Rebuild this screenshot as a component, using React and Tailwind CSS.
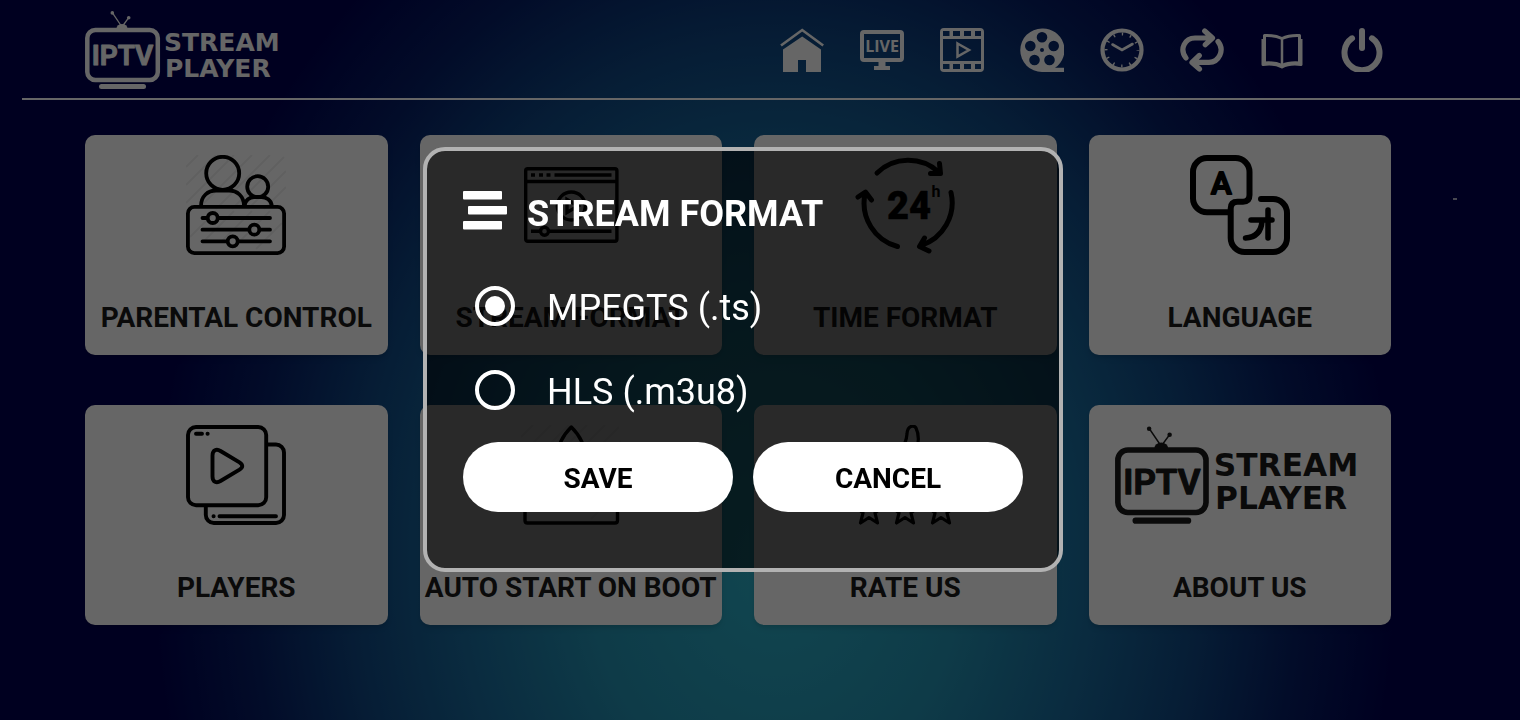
import { useState } from "react";

// LOGO
function Logo({ className }) {
  return (
    <svg viewBox="0 0 200 80" className={className} fill="currentColor" role="img" aria-label="IPTV Stream Player">
      <rect x="2.3" y="20" width="70.5" height="50" rx="8" fill="none" stroke="currentColor" strokeWidth="4.5" />
      <rect x="14" y="74" width="47" height="5" rx="2.5" />
      <path d="M31.5 18.5a5.5 4.5 0 0 1 11 0z" />
      <path d="M27.3 2.7L36 15.5M43.7 7.7L38 15.5" fill="none" stroke="currentColor" strokeWidth="1.3" />
      <circle cx="27.3" cy="2.9" r="1.8" />
      <circle cx="43.7" cy="7.7" r="1.8" />
      <text
        x="37.500"
        y="55"
        fontSize="28"
        textAnchor="middle"
        stroke="currentColor"
        strokeWidth="1"
        strokeLinejoin="round"
        className="font-['Roboto',sans-serif] font-semibold"
      >
        IPTV
      </text>
      <text x="79" y="41" fontSize="25" className="font-['DejaVu_Sans',sans-serif] font-bold">
        STREAM
      </text>
      <text x="80" y="67" fontSize="25" className="font-['DejaVu_Sans',sans-serif] font-bold">
        PLAYER
      </text>
    </svg>
  );
}

// TOP MENU ICONS (44x44)
const menuItems = [
  {
    name: "Home",
    icon: (
      <>
        <path d="M1 17.5L22.2 2L43.2 17.5" fill="none" stroke="currentColor" strokeWidth="2.600" />
        <path d="M3 21.5L22.2 8.5L41 21.5V44H26V32H18V44H3z" />
      </>
    ),
  },
  {
    name: "Live",
    icon: (
      <>
        <rect x="2" y="4" width="40" height="28" rx="2" fill="none" stroke="currentColor" strokeWidth="4" />
        <path d="M18.5 33h7v5H30v4H14v-4h4.500z" />
        <text x="22" y="24" fontSize="16" textAnchor="middle" className="font-['Open_Sans',sans-serif] font-bold">
          LIVE
        </text>
      </>
    ),
  },
  {
    name: "Movies",
    icon: (
      <>
        <path
          fillRule="evenodd"
          d="M4 0H40a4 4 0 0 1 4 4V40a4 4 0 0 1-4 4H4a4 4 0 0 1-4-4V4a4 4 0 0 1 4-4zM3 11V33H41V11zM3 3V8H9.500V3zM13 3V8H20V3zM24 3V8H31V3zM35 3V8H41V3zM3 36V41H9.500V36zM13 36V41H20V36zM24 36V41H31V36zM35 36V41H41V36z"
        />
        <path d="M17.500 15.500L29 22L17.500 28.500z" fill="none" stroke="currentColor" strokeWidth="2.500" />
      </>
    ),
  },
  {
    name: "Series",
    icon: (
      <path
        fillRule="evenodd"
        d="M22 .5A21.500 21.500 0 0 1 35 39.800H44V44H22A21.500 21.500 0 0 1 22 .5zM22 4a5.300 5.300 0 1 0 0 10.600a5.300 5.300 0 1 0 0-10.600zM33.700 12.700a5.300 5.300 0 1 0 0 10.600a5.300 5.300 0 1 0 0-10.600zM10.300 12.700a5.300 5.300 0 1 0 0 10.600a5.300 5.300 0 1 0 0-10.600zM14.500 26.700a5.300 5.300 0 1 0 0 10.600a5.300 5.300 0 1 0 0-10.600zM29.500 26.700a5.300 5.300 0 1 0 0 10.600a5.300 5.300 0 1 0 0-10.600zM22 20a2 2 0 1 0 0 4a2 2 0 1 0 0-4z"
      />
    ),
  },
  {
    name: "Catch up",
    icon: (
      <g fill="none" stroke="currentColor">
        <circle cx="22" cy="22" r="19.500" strokeWidth="4.200" />
        <circle cx="22" cy="22" r="16" strokeWidth="3" strokeDasharray="1.400 6.978" strokeDashoffset="0.700" />
        <path d="M12.500 16.500L22 22L32.500 16" strokeWidth="2.600" strokeLinecap="round" />
      </g>
    ),
  },
  {
    name: "Refresh",
    icon: (
      <g fill="none" stroke="currentColor" strokeWidth="5.200" strokeLinecap="round" strokeLinejoin="round">
        <path d="M6 30C-1 21 5 10 15 10H31M24.700 3L32.500 10L25.300 16.700" />
        <path d="M38 13.500C45 22 39 34.300 29 34.300H13M19.300 27.500L12 34.500L19.500 41" />
      </g>
    ),
  },
  {
    name: "Guide",
    icon: (
      <g fill="none" stroke="currentColor" strokeLinejoin="round">
        <path d="M4.500 34V7.500Q15 7 22 10.500Q29 7 39.500 7.500V34" strokeWidth="3" />
        <path d="M3 11V36.500Q15 35 22 39Q29 35 41 36.500V11" strokeWidth="3" />
        <path d="M4 34.500Q15 33.500 22 37Q29 33.500 40 34.500" strokeWidth="2" />
        <path d="M22 10V38" strokeWidth="2.500" />
      </g>
    ),
  },
  {
    name: "Exit",
    icon: (
      <g fill="none" stroke="currentColor" strokeWidth="6" strokeLinecap="round">
        <path d="M12 10.300A17.500 17.500 0 1 0 32 10.300" />
        <path d="M22 3V20" />
      </g>
    ),
  },
];

// Faint diagonal lines behind some of the card icons
function Hatch() {
  return (
    <path
      d="M0 12L12 0M0 30L30 0M0 48L48 0M12 54L66 0M30 54L84 0M46 54L98 2M62 54L100 16M78 54L100 32M4 82L30 56M18 86L48 56M36 86L66 56M54 86L84 56M70 94L96 68"
      stroke="black"
      strokeOpacity="0.060"
      strokeWidth="2"
    />
  );
}

// SETTINGS CARDS (icons are 100x100)
const cards = [
  {
    title: "PARENTAL CONTROL",
    icon: (
      <>
        <Hatch />
        <g strokeWidth="3.800">
          <circle cx="36.700" cy="18.300" r="16.500" />
          <path d="M15 51C15 41 22 35.500 30 35.500H43C51 35.500 58 41 58 51" />
          <circle cx="71.700" cy="31.700" r="10.500" />
          <path d="M58.500 51C59 45 64 42 68 42H75.500C80 42 85.500 45 85.700 51" />
          <rect x="1.900" y="51.900" width="96.200" height="46.200" rx="6.500" />
          <path d="M16.500 63H21M32 63H84M16.500 74.700H63M74 74.700H84M16.500 86.300H41M52 86.300H84" strokeLinecap="round" />
          <circle cx="26.700" cy="63" r="5" />
          <circle cx="68.300" cy="74.700" r="5" />
          <circle cx="46.700" cy="86.300" r="5" />
        </g>
      </>
    ),
  },
  {
    title: "STREAM FORMAT",
    icon: (
      <g strokeWidth="3.400">
        <rect x="4.700" y="13.700" width="91.200" height="72.600" rx="2" />
        <path d="M4.500 26.500H96M10 20H14M18 20H22M25.500 20H29.500M33.500 20H90.500" />
        <circle cx="50.300" cy="51" r="14" />
        <path d="M46 44.500V57.500L57 51z" />
        <path d="M10 76.300H19.500M27.500 76.300H90.500" />
        <circle cx="23.500" cy="76.300" r="4" />
      </g>
    ),
  },
  {
    title: "TIME FORMAT",
    icon: (
      <>
        <g strokeWidth="5" strokeLinecap="round" strokeLinejoin="round">
          <path d="M22 18A45 45 0 0 1 83.500 17M84.500 8.500L85.500 18.500L75.500 18.500" />
          <path d="M10 39A45 45 0 0 0 42.500 91.500M3 42L10.500 37L16.500 45" />
          <path d="M96 37.500A45 45 0 0 1 66 90.500M69.500 83L64.500 91.500L74 96" />
        </g>
        <text
          x="32"
          y="64"
          fontSize="38"
          fill="black"
          strokeWidth="0.500"
          strokeLinejoin="round"
          className="font-['Roboto',sans-serif] font-black"
        >
          24
        </text>
        <text x="76.500" y="41.500" fontSize="16" fill="black" stroke="none" className="font-['Roboto',sans-serif] font-bold">
          h
        </text>
      </>
    ),
  },
  {
    title: "LANGUAGE",
    icon: (
      <>
        <g strokeWidth="6" strokeLinecap="round" strokeLinejoin="round">
          <path d="M40 57.300H17A14 14 0 0 1 3 43.300V17A14 14 0 0 1 17 3H45.500A14 14 0 0 1 59.500 17V40Q59.500 46.700 53 46.700H47.500Q40.700 46.700 40.700 53.500V83A14 14 0 0 0 54.700 97H83A14 14 0 0 0 97 83V58A14 14 0 0 0 83 44H71" />
          <path d="M61 65H82M78 55V83M72 66Q71 82 55.500 83" strokeWidth="5.500" />
        </g>
        <text
          x="31.300"
          y="39"
          fontSize="31"
          fill="black"
          strokeWidth="2"
          strokeLinejoin="round"
          textAnchor="middle"
          className="font-['Roboto',sans-serif] font-medium"
        >
          A
        </text>
      </>
    ),
  },
  {
    title: "PLAYERS",
    icon: (
      <g strokeWidth="3.900" strokeLinecap="round">
        <rect x="2" y="2" width="78.200" height="78.200" rx="8" />
        <path d="M81 19.500H90A8 8 0 0 1 98 27.500V90A8 8 0 0 1 90 98H27.800A8 8 0 0 1 19.800 90V81" />
        <path d="M26.500 30.500C26.500 25 30.500 23.500 34.500 26L53.500 37.300Q59 41 53.500 44.700L34.500 56C30.500 58.500 26.500 57 26.500 51.500z" />
        <path d="M10 8.700H16M21.500 8.700H21.700M27.500 91.200H27.700M33.500 91.200H90" />
      </g>
    ),
  },
  {
    title: "AUTO START ON BOOT",
    icon: (
      <>
        <Hatch />
        <g strokeWidth="3.400" strokeLinejoin="round">
          <path d="M36 70V34Q36 16 50.300 2Q64.500 16 64.500 34V70z" />
          <circle cx="50.300" cy="34" r="6" />
          <path d="M36 60H4V95.500Q4 98 6.500 98H94Q96.500 98 96.500 95.500V60H64.500M50.300 72V87" />
        </g>
      </>
    ),
  },
  {
    title: "RATE US",
    icon: (
      <g strokeWidth="3.200" strokeLinejoin="round">
        <path d="M34 34C46 28 51 20 52 9C52.500 0 59 0 61 3C64 9 64 18 61 28H76Q82 30 79 37L74 60Q72 66 64 66H34z" />
        <path d="M20 32H34V66H20z" />
        {[14, 50, 86].map((x) => (
          <path key={x} transform={`translate(${x} 86)`} d="M0-14L3.800-5L13.300-4.300L6 2L8.500 12L0 6.500L-8.500 12L-6 2L-13.300-4.300L-3.800-5z" />
        ))}
      </g>
    ),
  },
  { title: "ABOUT US", icon: null },
];

const formats = [
  { id: "ts", label: "MPEGTS (.ts)" },
  { id: "m3u8", label: "HLS (.m3u8)" },
];

function Header() {
  return (
    <header>
      <div className="flex items-center justify-between pt-2.5 pb-2 pl-[85px] pr-[136px]">
        <Logo className="w-[200px] h-20" />
        <nav className="flex gap-9">
          {menuItems.map((item) => (
            <button key={item.name} type="button" aria-label={item.name}>
              <svg viewBox="0 0 44 44" className="block size-11" fill="currentColor">
                {item.icon}
              </svg>
            </button>
          ))}
        </nav>
      </div>
      <div className="ml-[22px] h-0.5 bg-white" />
    </header>
  );
}

function Card({ title, icon }) {
  return (
    <button
      type="button"
      className="flex h-[220px] flex-col items-center justify-between rounded-[10px] bg-white pt-5 pb-[17px] text-[#1a1a1a] shadow-md"
    >
      {icon ? (
        <svg viewBox="0 0 100 100" className="size-[100px]" fill="none" stroke="black">
          {icon}
        </svg>
      ) : (
        <Logo className="h-[100px] w-[250px]" />
      )}
      <span className="text-[28px] leading-10 font-bold whitespace-nowrap">{title}</span>
    </button>
  );
}

function StreamFormatDialog() {
  const [format, setFormat] = useState("ts");

  return (
    <div className="fixed inset-0 flex items-center justify-center bg-black/60 pr-[34px] pb-px">
      <form
        role="dialog"
        aria-labelledby="dialog-title"
        onSubmit={(e) => e.preventDefault()}
        className="w-[640px] rounded-[22px] border-4 border-[#b2b2b2] bg-black/60 bg-clip-padding px-9 pt-9 pb-14"
      >
        <div className="flex items-center gap-5">
          <svg viewBox="0 0 44 48" className="h-12 w-11" fill="white">
            <rect x="0" y="1" width="39" height="8.500" rx="1" />
            <rect x="5" y="16" width="39" height="8.500" rx="1" />
            <rect x="0" y="31" width="39" height="8.500" rx="1" />
          </svg>
          <h2 id="dialog-title" className="text-[36px] leading-[54px] font-bold">
            STREAM FORMAT
          </h2>
        </div>

        <div className="mt-[23px] flex flex-col pl-3">
          {formats.map((f) => (
            <label key={f.id} className="flex h-[84px] items-center gap-8 text-[36px]">
              <input
                type="radio"
                name="format"
                value={f.id}
                checked={format === f.id}
                onChange={() => setFormat(f.id)}
                className="size-10 appearance-none rounded-full border-4 border-white bg-clip-content p-1.5 checked:bg-white"
              />
              <span className="pt-1">{f.label}</span>
            </label>
          ))}
        </div>

        <div className="mt-2.5 grid grid-cols-2 gap-5 text-[28px] font-bold text-black">
          <button type="submit" className="h-[70px] rounded-full bg-white pt-1">
            SAVE
          </button>
          <button type="button" className="h-[70px] rounded-full bg-white pt-1">
            CANCEL
          </button>
        </div>
      </form>
    </div>
  );
}

function App() {
  return (
    <div className="relative min-h-screen bg-[#000252] bg-[radial-gradient(620px_760px_at_775px_560px,#2cb0c8_0%,#2494b4_30%,#1a6ea0_50%,#104a86_68%,#061e66_85%,#000252_100%)] font-['Roboto',sans-serif] text-white">
      <Header />
      <main className="grid grid-cols-4 gap-x-8 gap-y-[50px] pt-[35px] pr-[129px] pb-[95px] pl-[85px]">
        {cards.map((card) => (
          <Card key={card.title} title={card.title} icon={card.icon} />
        ))}
      </main>
      <span className="absolute top-[198px] right-[63px] h-0.5 w-1 bg-white/70" />
      <StreamFormatDialog />
    </div>
  );
}

export default App;
